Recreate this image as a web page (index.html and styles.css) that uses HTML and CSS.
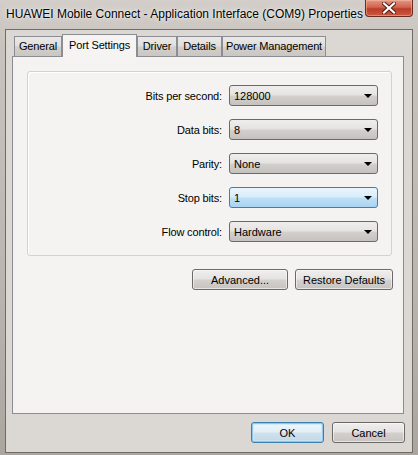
FILE: index.html
```html
<!DOCTYPE html>
<html lang="en">
<head>
  <meta charset="UTF-8" />
  <title>HUAWEI Mobile Connect - Application Interface (COM9) Properties</title>
  <link rel="stylesheet" href="styles.css">
</head>
<body>
  <div class="window">
    <div class="titlebar">
      <span class="title">HUAWEI Mobile Connect - Application Interface (COM9) Properties</span>
      <button class="close-btn" title="Close">
        <svg width="14" height="12" viewBox="0 0 14 12">
          <path d="M2 1.5 L12 10.5 M12 1.5 L2 10.5" stroke="#4a1a12" stroke-width="4" stroke-linecap="square" />
          <path d="M2 1.5 L12 10.5 M12 1.5 L2 10.5" stroke="#ffffff" stroke-width="2.2" stroke-linecap="square" />
        </svg>
      </button>
    </div>

    <div class="client">
      <div class="tabs">
        <div class="tab tab-general">General</div>
        <div class="tab tab-port active">Port Settings</div>
        <div class="tab tab-driver">Driver</div>
        <div class="tab tab-details">Details</div>
        <div class="tab tab-power">Power Management</div>
      </div>

      <div class="panel">
        <div class="group">
          <label class="field-label">Bits per second:</label>
          <div class="combo"><span>128000</span><i class="arrow"></i></div>

          <label class="field-label">Data bits:</label>
          <div class="combo"><span>8</span><i class="arrow"></i></div>

          <label class="field-label">Parity:</label>
          <div class="combo"><span>None</span><i class="arrow"></i></div>

          <label class="field-label">Stop bits:</label>
          <div class="combo focused"><span>1</span><i class="arrow"></i></div>

          <label class="field-label">Flow control:</label>
          <div class="combo"><span>Hardware</span><i class="arrow"></i></div>
        </div>

        <div class="panel-buttons">
          <button class="btn btn-advanced">Advanced...</button>
          <button class="btn btn-restore">Restore Defaults</button>
        </div>
      </div>

      <div class="dialog-buttons">
        <button class="btn btn-ok">OK</button>
        <button class="btn btn-cancel">Cancel</button>
      </div>
    </div>
  </div>
</body>
</html>
```

FILE: styles.css
```css
* {
  box-sizing: border-box;
}

body {
  margin: 0;
  font-family: 'Liberation Sans', Arial, sans-serif;
  font-size: 11px;
  color: #000;
}

/* Aero frame */
.window {
  width: 418px;
  height: 455px;
  background: linear-gradient(180deg, #d3cec9 0%, #c9c3be 10%, #bcb6b1 60%, #aca6a1 100%);
  overflow: hidden;
}

.titlebar {
  height: 29px;
  display: flex;
  align-items: flex-start;
}

.title {
  flex: 1;
  padding: 7px 0 0 6px;
  font-size: 12px;
  white-space: nowrap;
  text-shadow: 0 0 6px rgba(255, 255, 255, 0.9), 0 0 2px rgba(255, 255, 255, 0.8);
}

.close-btn {
  width: 48px;
  height: 17px;
  margin-right: 5px;
  padding: 0;
  border: 1px solid #6a2a20;
  border-top: none;
  border-radius: 0 0 4px 4px;
  background: linear-gradient(180deg, #e49683 0%, #d0644e 45%, #bd3c28 55%, #c95a43 100%);
  box-shadow: inset 0 0 0 1px rgba(255, 200, 180, 0.45);
  display: flex;
  align-items: center;
  justify-content: center;
}

/* Dialog body */
.client {
  width: 408px;
  height: 424px;
  margin-left: 5px;
  border: 1px solid #6f6b67;
  background: #dbd8d4;
  padding: 4px 8px 0 6px;
}

.tabs {
  display: flex;
  align-items: flex-end;
  height: 22px;
  margin-left: 2px;
  position: relative;
  z-index: 1;
}

.tab {
  height: 20px;
  border: 1px solid #8b8d93;
  border-bottom: none;
  background: linear-gradient(180deg, #ebe9e7 0%, #e1dfdc 45%, #d2cfcb 55%, #cac6c2 100%);
  text-align: center;
  line-height: 19px;
  white-space: nowrap;
  letter-spacing: -0.15px;
}

.tab-general { width: 48px; }
.tab-port { width: 75px; }
.tab-driver { width: 40px; }
.tab-details { width: 45px; }
.tab-power { width: 104px; }

.tab.active {
  height: 23px;
  margin-bottom: -1px;
  background: #f5f4f2;
  line-height: 20px;
}

.panel {
  width: 392px;
  height: 358px;
  border: 1px solid #8b8d93;
  background: #f4f3f1;
  padding: 14px 11px 0 14px;
}

.group {
  display: grid;
  grid-template-columns: 1fr 149px;
  grid-auto-rows: 21px;
  column-gap: 7px;
  row-gap: 13px;
  padding: 13px 13px 13px 0;
  border: 1px solid #d3d2cf;
  border-radius: 3px;
  box-shadow: inset 1px 1px 0 #fff;
}

.field-label {
  text-align: right;
  align-self: center;
  white-space: nowrap;
  letter-spacing: -0.15px;
}

.combo {
  position: relative;
  display: flex;
  align-items: center;
  padding-left: 4px;
  border: 1px solid #6c6a68;
  border-radius: 3px;
  background: linear-gradient(180deg, #efeeed 0%, #e5e3e1 48%, #d3d0cd 52%, #c4c1be 100%);
}

.combo.focused {
  border-color: #3c7fb1;
  background: linear-gradient(180deg, #eaf5fc 0%, #d8edfa 48%, #bfe0f6 52%, #a9d3f1 100%);
}

.arrow {
  position: absolute;
  right: 5px;
  top: 8px;
  width: 0;
  height: 0;
  border-left: 4px solid transparent;
  border-right: 4px solid transparent;
  border-top: 4px solid #000;
}

.panel-buttons {
  display: flex;
  justify-content: flex-end;
  gap: 7px;
  margin-top: 13px;
  margin-right: -1px;
}

.btn {
  height: 21px;
  padding: 0;
  font-family: inherit;
  font-size: 11px;
  color: #000;
  border: 1px solid #6c6a68;
  border-radius: 3px;
  background: linear-gradient(180deg, #efeeed 0%, #e5e3e1 48%, #d3d0cd 52%, #c6c3c0 100%);
  box-shadow: inset 0 0 0 1px rgba(255, 255, 255, 0.55);
}

.btn-advanced { width: 96px; }
.btn-restore { width: 98px; }

.dialog-buttons {
  display: flex;
  justify-content: flex-end;
  gap: 8px;
  margin-top: 8px;
  margin-right: -1px;
}

.btn-ok,
.btn-cancel {
  width: 73px;
}

.btn-ok {
  border-color: #3c7fb1;
  box-shadow: inset 0 0 0 1px #8ec6ef, inset 0 0 0 2px rgba(200, 232, 250, 0.7);
  background: linear-gradient(180deg, #eef6fb 0%, #e2eef6 48%, #cfe1ec 52%, #c2d8e6 100%);
}
```
